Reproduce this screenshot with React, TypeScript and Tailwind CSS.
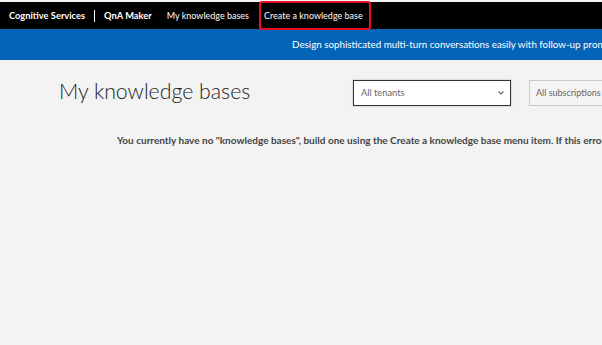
export default function App() {
  const font = { fontFamily: 'Lato, "Open Sans", sans-serif' };

  return (
    <div
      className="h-[345px] w-[602px] overflow-hidden bg-[#f3f3f3] pt-[2px] text-[#333]"
      style={font}
    >
      {/* top nav */}
      <div className="flex h-[27px] items-center whitespace-nowrap bg-black text-[9.3px] text-white">
        <span className="ml-[9px] shrink-0 font-bold">Cognitive Services</span>
        <span className="ml-[9px] h-[12px] w-px shrink-0 bg-white"></span>
        <span className="ml-[9px] shrink-0 font-bold">QnA Maker</span>
        <span className="ml-[15px] shrink-0 text-[9px]">My knowledge bases</span>
        <div className="ml-[10px] flex h-[29px] w-[112px] shrink-0 items-center rounded-[3px] border-2 border-[#e81123] pl-[3px] text-[9px]">
          <span>Create a knowledge base</span>
        </div>
      </div>

      {/* banner */}
      <div className="flex h-[31px] items-center overflow-hidden whitespace-nowrap bg-[#0364b8] pl-[292px] text-[9.8px] text-white">
        Design sophisticated multi-turn conversations easily with follow-up prompts
      </div>

      {/* header row */}
      <div className="flex items-start whitespace-nowrap pt-[20px]">
        <h1 className="ml-[59px] mt-[-4px] w-[294px] shrink-0 text-[21.3px] font-light leading-[30px] text-[#222]">
          My knowledge bases
        </h1>
        <div className="flex h-[26px] w-[158px] shrink-0 items-center justify-between border border-[#333] bg-white pl-[7px] pr-[5px] text-[9.3px] text-[#666] shadow-[0_0_2px_rgba(0,0,0,0.25)]">
          <span>All tenants</span>
          <svg width="8" height="6" viewBox="0 0 8 6" fill="none">
            <path d="M1.5 1.5 L4 4 L6.5 1.5" stroke="#666" strokeWidth="1.1" />
          </svg>
        </div>
        <div className="ml-[18px] flex h-[26px] w-[100px] shrink-0 items-center border border-[#c8c8c8] bg-[#f4f4f4] pl-[6px] text-[9px] text-[#666]">
          All subscriptions
        </div>
      </div>

      {/* empty message */}
      <div className="mt-[27px] whitespace-nowrap pl-[117px] text-[10px] font-bold text-[#444]">
        You currently have no "knowledge bases", build one using the Create a knowledge base menu item. If this error persists, please contact support.
      </div>
    </div>
  );
}
